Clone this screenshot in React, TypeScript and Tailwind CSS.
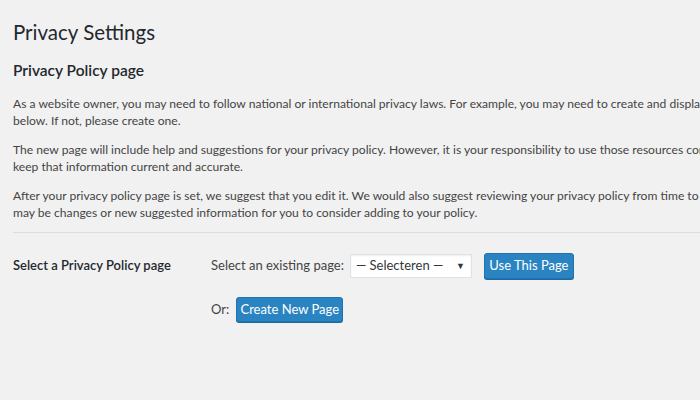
import React from 'react';

const font = { fontFamily: 'Lato, "Open Sans", sans-serif' };

const paragraphs: string[][] = [
  [
    'As a website owner, you may need to follow national or international privacy laws. For example, you may need to create and display a privacy policy. If you already have a Privacy Policy page, please select it',
    'below. If not, please create one.',
  ],
  [
    'The new page will include help and suggestions for your privacy policy. However, it is your responsibility to use those resources correctly, to provide the information that your privacy policy requires, and to',
    'keep that information current and accurate.',
  ],
  [
    'After your privacy policy page is set, we suggest that you edit it. We would also suggest reviewing your privacy policy from time to time, especially after installing or updating any themes or plugins. There',
    'may be changes or new suggested information for you to consider adding to your policy.',
  ],
];

export default function App() {
  return (
    <div className="w-[700px] h-[400px] overflow-hidden bg-[#f1f1f1] text-[#444]" style={font}>
      <div className="pl-[13px] pt-[18px]">
        <h1 className="text-[20.5px] leading-[28px] text-[#23282d] font-normal">Privacy Settings</h1>
        <h2 className="mt-[14px] text-[15.5px] leading-[20px] text-[#23282d] font-semibold">Privacy Policy page</h2>

        <div className="mt-[15px] flex flex-col gap-[12px] text-[12.1px] leading-[17px]">
          {paragraphs.map((lines, i) => (
            <p key={i}>
              {lines.map((l, j) => (
                <span key={j} className="block whitespace-nowrap">{l}</span>
              ))}
            </p>
          ))}
        </div>

        <div className="mt-[11px] h-px bg-[#ddd]" />

        <div className="mt-[20px] flex">
          <div className="w-[198px] pt-[3px] text-[13px] font-semibold text-[#23282d]">Select a Privacy Policy page</div>
          <div className="flex flex-col gap-[18px] text-[13px]">
            <div className="flex items-center">
              <span>Select an existing page:</span>
              <div className="ml-[6px] w-[122px] h-[24px] bg-white border border-[#e2e2e2] shadow-[inset_0_1px_2px_rgba(0,0,0,0.07)] flex items-center justify-between pl-[5px] pr-[6px] text-[#32373c]">
                <span>— Selecteren —</span>
                <span className="text-[9px]">▼</span>
              </div>
              <button className="ml-[12px] h-[26px] w-[90px] rounded-[3px] bg-[#2a84c2] border border-[#1f72ad] text-white text-[13px] shadow-[0_1px_0_#1d6aa0]">
                Use This Page
              </button>
            </div>
            <div className="flex items-center">
              <span>Or:</span>
              <button className="ml-[7px] h-[25px] w-[107px] rounded-[3px] bg-[#2a84c2] border border-[#1f72ad] text-white text-[13px] shadow-[0_1px_0_#1d6aa0]">
                Create New Page
              </button>
            </div>
          </div>
        </div>
      </div>
    </div>
  );
}
